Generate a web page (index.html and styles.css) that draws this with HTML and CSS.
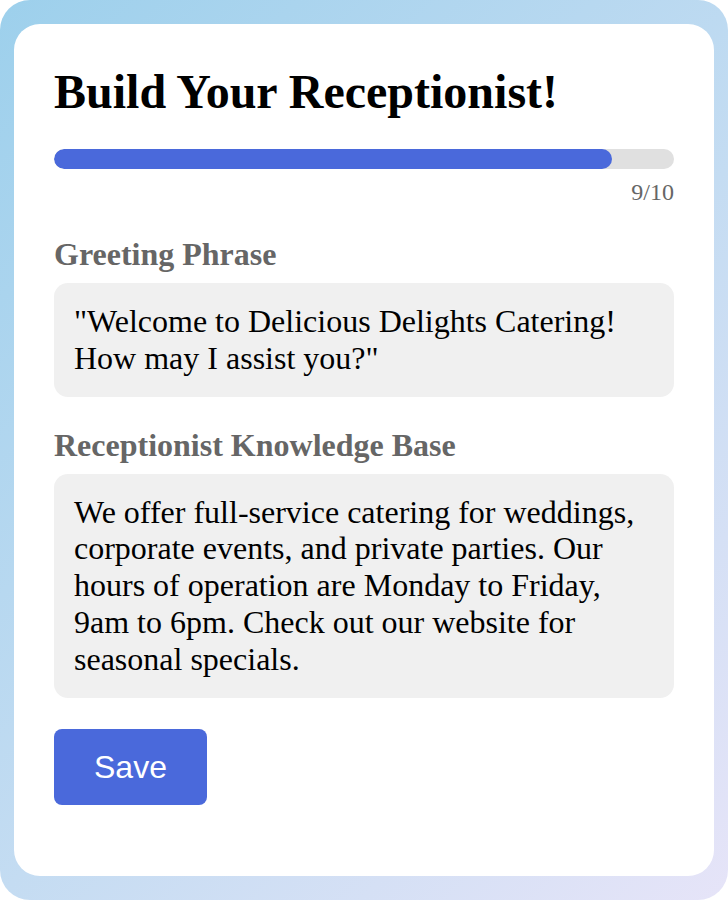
FILE: index.html
```html
<!DOCTYPE html>
<html lang="en">
<head>
  <meta charset="UTF-8">
  <meta name="viewport" content="width=device-width, initial-scale=1.0">
  <title>Build Your Receptionist</title>
  <link rel="stylesheet" href="styles.css">
</head>
<body>
  <div class="backdrop">
    <div class="card">
      <h1>Build Your Receptionist!</h1>
      <div class="progress">
        <div class="progress-fill" style="width: 90%"></div>
      </div>
      <div class="step">9/10</div>

      <div class="field">
        <label>Greeting Phrase</label>
        <div class="box">"Welcome to Delicious Delights Catering! How may I assist you?"</div>
      </div>

      <div class="field">
        <label>Receptionist Knowledge Base</label>
        <div class="box">We offer full-service catering for weddings, corporate events, and private parties. Our hours of operation are Monday to Friday, 9am to 6pm. Check out our website for seasonal specials.</div>
      </div>

      <button class="save">Save</button>
    </div>
  </div>
</body>
</html>
```

FILE: styles.css
```css
body {
  margin: 0;
  background: #fff;
  font-family: "Liberation Serif", "Times New Roman", serif;
}
.backdrop {
  height: 900px;
  box-sizing: border-box;
  padding: 24px 14px;
  border-radius: 30px;
  background: linear-gradient(135deg, #9dd0ec 0%, #c4dcf2 55%, #e6e4f8 100%);
}
.card {
  background: #fff;
  border-radius: 26px;
  height: 100%;
  box-sizing: border-box;
  padding: 40px;
}
.card h1 {
  margin: 0;
  font-size: 48px;
  line-height: 55px;
  color: #000;
}
.progress {
  margin-top: 30px;
  height: 20px;
  border-radius: 10px;
  background: #e0e0e0;
  overflow: hidden;
}
.progress-fill {
  height: 100%;
  border-radius: 10px;
  background: #4a69db;
}
.step {
  text-align: right;
  font-size: 24px;
  line-height: 28px;
  color: #666;
  margin-top: 9px;
}
.field {
  margin-top: 30px;
}
.field label {
  display: block;
  font-size: 32px;
  line-height: 37px;
  font-weight: bold;
  color: #666;
}
.box {
  margin-top: 10px;
  background: #f0f0f0;
  border-radius: 14px;
  padding: 20px;
  font-size: 32px;
  line-height: 36.8px;
  color: #000;
}
.save {
  margin-top: 31px;
  padding: 20px 40px;
  border: none;
  border-radius: 8px;
  background: #4a69db;
  color: #fff;
  font-family: "Liberation Sans", Arial, sans-serif;
  font-size: 32px;
  line-height: 36px;
}
```
